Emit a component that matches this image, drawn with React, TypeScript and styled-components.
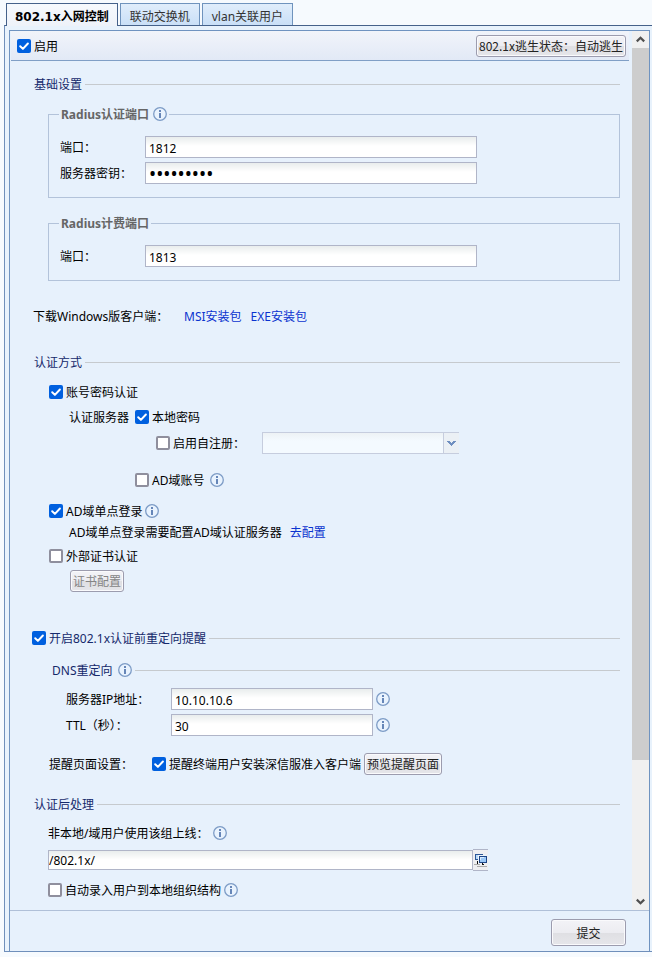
import React, { useState } from 'react';
import styled, { createGlobalStyle, css } from 'styled-components';

const GlobalStyle = createGlobalStyle`
  *, *::before, *::after { box-sizing: border-box; }
  body {
    margin: 0;
    background: #f6fafe;
    color: #000;
    font: 12px/20px "Noto Sans", "Noto Sans CJK SC", sans-serif;
  }
  input, button, select { font: inherit; color: inherit; margin: 0; }
`;

const Page = styled.div`
  min-height: 100vh;
  display: flex;
  flex-direction: column;
  padding: 3px 0 5px 4px;
`;

const TabBar = styled.div`
  display: flex;
  gap: 2px;
  padding-left: 2px;
`;

const Tab = styled.button<{ $active?: boolean }>`
  height: 22px;
  padding: 4px 9px 0;
  line-height: 18px;
  border: 1px solid #6f93bd;
  border-bottom: 0;
  background: linear-gradient(#e0edfb, #c9dff7);
  color: #333;
  white-space: nowrap;
  ${(p) =>
    p.$active &&
    css`
      height: 23px;
      margin-bottom: -1px;
      padding: 4px 8px 0;
      z-index: 1;
      border-color: #45618a;
      background: linear-gradient(#f6f9fd, #eef2f9);
      color: #000;
      font-family: "DejaVu Sans", "Noto Sans CJK SC", sans-serif;
      font-weight: 700;
    `}
`;

const Frame = styled.div`
  flex: 1;
  display: flex;
  flex-direction: column;
  padding: 4px 2px 0 4px;
  border: solid #6f8fbb;
  border-width: 1px 0 1px 1px;
  border-top-color: #45618a;
  background: #e8f2fc;
`;

const Panel = styled.main`
  flex: 1;
  display: flex;
  flex-direction: column;
  border: 1px solid #6f93c0;
  border-bottom: 0;
  background: #e7f1fc;
`;

const Viewport = styled.div`
  flex: 1;
  display: flex;
`;

const Content = styled.div`
  flex: 1;
  min-width: 0;
  padding: 0 3px 8px 1px;
`;

const TopBar = styled.header`
  display: flex;
  align-items: center;
  justify-content: space-between;
  height: 30px;
  padding: 0 3px 0 6px;
  border-bottom: 1px solid #809fc6;
  background: linear-gradient(#f1f4fa, #e2e9f6);
`;

const Form = styled.form`
  padding: 13px 9px 0 21px;
`;

const Text = styled.span`
  padding-top: 2px;
  line-height: 18px;
`;

const CheckLabel = styled.label`
  display: inline-flex;
  align-items: center;
  gap: 3px;
  white-space: nowrap;
`;

const CheckBox = styled.input.attrs({ type: 'checkbox' })`
  appearance: none;
  flex: none;
  width: 14px;
  height: 14px;
  border: 2px solid #8f8f9d;
  border-radius: 2px;
  background: #fff;
  &:checked {
    border: 0;
    background: #0060df
      url("data:image/svg+xml,%3Csvg xmlns='http://www.w3.org/2000/svg' viewBox='0 0 14 14'%3E%3Cpath d='M3.2 7.2l2.7 2.7 5-5.4' fill='none' stroke='white' stroke-width='2' stroke-linecap='round' stroke-linejoin='round'/%3E%3C/svg%3E");
  }
`;

const Button = styled.button<{ $large?: boolean }>`
  height: ${(p) => (p.$large ? 27 : 22)}px;
  min-width: ${(p) => (p.$large ? 75 : 0)}px;
  padding: 0 2px;
  border: 1px solid #9c9cae;
  border-radius: 3px;
  background: linear-gradient(#f3f3f7 0%, #ececf1 50%, #dfdfe3 51%, #e6e6ea 100%);
  box-shadow: inset 0 0 0 1px #fafafc;
  color: #222;
  font-family: "Noto Sans CJK SC", sans-serif;
  line-height: 18px;
  white-space: nowrap;
  &:disabled { color: #858585; }
`;

const Heading = styled.h2<{ $top?: number; $indent?: number }>`
  display: flex;
  align-items: center;
  gap: 3px;
  height: 20px;
  margin: ${(p) => p.$top ?? 0}px 0 0;
  padding-left: ${(p) => p.$indent ?? 2}px;
  color: #15296b;
  font-size: 12px;
  font-weight: 400;
  white-space: nowrap;
  &::after {
    content: '';
    flex: 1;
    height: 1px;
    background: #c6cace;
  }
`;

const Group = styled.fieldset<{ $top: number }>`
  display: flex;
  flex-direction: column;
  gap: 4px;
  min-width: 0;
  margin: ${(p) => p.$top}px 0 0 16px;
  padding: 12px 10px 13px;
  border: 1px solid #b3c3da;
`;

const Legend = styled.legend`
  display: flex;
  align-items: center;
  gap: 4px;
  height: 20px;
  padding: 0 2px;
  color: #666;
  font-weight: 700;
`;

const Row = styled.div<{ $top?: number; $indent?: number; $gap?: number }>`
  display: flex;
  align-items: center;
  gap: ${(p) => p.$gap ?? 3}px;
  min-height: 20px;
  margin-top: ${(p) => p.$top ?? 0}px;
  padding-left: ${(p) => p.$indent ?? 0}px;
  white-space: nowrap;
`;

const FieldLabel = styled.label<{ $width?: number }>`
  flex: none;
  width: ${(p) => (p.$width ? `${p.$width}px` : 'auto')};
  padding-top: 2px;
  line-height: 18px;
`;

const Caption = styled(Text)<{ $width: number }>`
  flex: none;
  width: ${(p) => p.$width}px;
`;

const TextBox = styled.input<{ $width: number; $flush?: boolean }>`
  width: ${(p) => p.$width}px;
  min-width: 0;
  height: ${(p) => (p.$flush ? 20 : 22)}px;
  padding: ${(p) => (p.$flush ? '2px 0 0' : '2px 3px 0')};
  border: 1px solid #b0b5c8;
  border-radius: 0;
  outline: 0;
  background: linear-gradient(#e9eded, #fff 9px);
  &[type='password'] {
    font-size: 19px;
  }
`;

const Link = styled.a`
  padding-top: 1px;
  line-height: 19px;
  color: #0a33cf;
  text-decoration: none;
`;

const Combo = styled.span`
  display: inline-flex;
  position: relative;
  margin-left: 14px;
`;

const Select = styled.select`
  appearance: none;
  width: 197px;
  height: 22px;
  border: 1px solid #c6cdde;
  border-right: 0;
  border-radius: 0;
  background: linear-gradient(#edf2f5, #f4faff 8px);
  opacity: 1;
`;

const ComboArrow = styled.span`
  position: absolute;
  top: 1px;
  right: 0;
  bottom: 1px;
  width: 16px;
  display: grid;
  place-items: center;
  border-left: 1px solid #c6cdde;
  background: #ebf0f5;
  pointer-events: none;
`;

const InfoButton = styled.button`
  flex: none;
  display: block;
  width: 14px;
  height: 14px;
  padding: 0;
  border: 0;
  background: none;
`;

const PickButton = styled.button`
  display: grid;
  place-items: center;
  width: 15px;
  height: 22px;
  padding: 0;
  border: solid #b0b5c8;
  border-width: 1px 0;
  background: #eeeef1;
`;

const Track = styled.div`
  flex: none;
  width: 17px;
  display: flex;
  flex-direction: column;
  background: #f0f0f0;
`;

const TrackButton = styled.button`
  display: grid;
  place-items: center;
  height: 17px;
  padding: 0;
  border: 0;
  background: none;
`;

const Thumb = styled.div`
  flex: 712;
  background: #cdcdcd;
`;

const TrackRest = styled.div`
  flex: 133;
`;

const Footer = styled.footer`
  display: flex;
  justify-content: flex-end;
  padding: 8px 23px 5px;
  border-top: 1px solid #b0c0d8;
`;

const Info = () => (
  <InfoButton type="button" aria-label="说明">
    <svg width="14" height="14" viewBox="0 0 14 14">
      <circle cx="7" cy="7" r="6.3" fill="#e9f3fe" stroke="#7d9cc6" strokeWidth="1.3" />
      <path d="M6 3h2v2H6zM6 6h2v5H6z" fill="#6686b8" />
    </svg>
  </InfoButton>
);

const Check = ({ label, on, disabled }: { label: string; on?: boolean; disabled?: boolean }) => {
  const [checked, setChecked] = useState(!!on);
  return (
    <CheckLabel>
      <CheckBox checked={checked} disabled={disabled} onChange={(e) => setChecked(e.target.checked)} />
      <Text>{label}</Text>
    </CheckLabel>
  );
};

const Chevron = ({ up }: { up?: boolean }) => (
  <svg width="9" height="7" viewBox="0 0 9 7">
    <path d={up ? 'M.8 5.4 4.5 1.7l3.7 3.7' : 'M.8 1.6l3.7 3.7 3.7-3.7'} fill="none" stroke="#505050" strokeWidth="2.2" />
  </svg>
);

const PickIcon = () => (
  <svg width="13" height="14" viewBox="0 0 13 14" shapeRendering="crispEdges">
    <path d="M1 1h8v6H1z" fill="#2b5797" />
    <path d="M2 2h6v4H2z" fill="#b9dafa" />
    <path d="M4 2h9v8H4z" fill="#eef4fb" />
    <path d="M5 3h8v7H5z" fill="#1d4587" />
    <path d="M6 4h6v5H6z" fill="#9cc8f6" />
    <path d="M6 4h4v1H7v2H6z" fill="#d9ecff" />
    <path d="M3 8h1v3H3zM8 10h1v1h1v1H8z" fill="#111" />
    <path d="M0 11h6v1H0zM3 13h10v1H3z" fill="#aaa" />
  </svg>
);

const tabs = ['802.1x入网控制', '联动交换机', 'vlan关联用户'];

export default function App() {
  const [tab, setTab] = useState(0);
  return (
    <>
      <GlobalStyle />
      <Page>
        <TabBar role="tablist">
          {tabs.map((name, i) => (
            <Tab key={name} role="tab" aria-selected={i === tab} $active={i === tab} onClick={() => setTab(i)}>
              {name}
            </Tab>
          ))}
        </TabBar>
        <Frame>
          <Panel>
            <Viewport>
              <Content>
                <TopBar>
                  <Check label="启用" on />
                  <Button type="button">802.1x逃生状态：自动逃生</Button>
                </TopBar>
                <Form id="access" onSubmit={(e) => e.preventDefault()}>
                  <Heading><Text>基础设置</Text></Heading>
                  <Group $top={10}>
                    <Legend><Text>Radius认证端口</Text><Info /></Legend>
                    <Row $gap={0} $indent={1}>
                      <FieldLabel $width={85} htmlFor="auth-port">端口：</FieldLabel>
                      <TextBox id="auth-port" $width={332} defaultValue="1812" />
                    </Row>
                    <Row $gap={0} $indent={1}>
                      <FieldLabel $width={85} htmlFor="secret">服务器密钥：</FieldLabel>
                      <TextBox id="secret" type="password" $width={332} defaultValue="radius123" />
                    </Row>
                  </Group>
                  <Group $top={15}>
                    <Legend><Text>Radius计费端口</Text></Legend>
                    <Row $gap={0} $indent={1}>
                      <FieldLabel $width={85} htmlFor="acct-port">端口：</FieldLabel>
                      <TextBox id="acct-port" $width={332} defaultValue="1813" />
                    </Row>
                  </Group>
                  <Row $top={25} $indent={1} $gap={9}>
                    <Caption $width={142}>下载Windows版客户端：</Caption>
                    <Link href="#msi">MSI安装包</Link>
                    <Link href="#exe">EXE安装包</Link>
                  </Row>

                  <Heading $top={26}><Text>认证方式</Text></Heading>
                  <Row $top={10} $indent={17}><Check label="账号密码认证" on /></Row>
                  <Row $top={5} $indent={37} $gap={6}>
                    <Text>认证服务器</Text>
                    <Check label="本地密码" on />
                  </Row>
                  <Row $top={5} $indent={124}>
                    <Check label="启用自注册：" />
                    <Combo>
                      <Select disabled aria-label="自注册方式" />
                      <ComboArrow>
                        <svg width="9" height="5" viewBox="0 0 9 5" shapeRendering="crispEdges">
                          <path d="M0 0h3v1h1v1h1V1h1V0h3v1H8v1H7v1H6v1H5v1H4V4H3V3H2V2H1V1H0z" fill="#6f8fc0" />
                        </svg>
                      </ComboArrow>
                    </Combo>
                  </Row>
                  <Row $top={16} $indent={103} $gap={6}><Check label="AD域账号" /><Info /></Row>
                  <Row $top={11} $indent={17}><Check label="AD域单点登录" on /><Info /></Row>
                  <Row $top={1} $indent={37} $gap={8}>
                    <Text>AD域单点登录需要配置AD域认证服务器</Text>
                    <Link href="#configure">去配置</Link>
                  </Row>
                  <Row $top={4} $indent={17}><Check label="外部证书认证" /></Row>
                  <Row $top={4} $indent={38}><Button type="button" disabled>证书配置</Button></Row>

                  <Heading $top={36} $indent={0}><Check label="开启802.1x认证前重定向提醒" on /></Heading>
                  <Heading as="h3" $top={12} $indent={20}>
                    <Row $gap={6}><Text>DNS重定向</Text><Info /></Row>
                  </Heading>
                  <Row $top={8} $indent={34}>
                    <FieldLabel $width={102} htmlFor="server-ip">服务器IP地址：</FieldLabel>
                    <TextBox id="server-ip" $width={202} defaultValue="10.10.10.6" />
                    <Info />
                  </Row>
                  <Row $top={4} $indent={34}>
                    <FieldLabel $width={102} htmlFor="ttl">TTL（秒）：</FieldLabel>
                    <TextBox id="ttl" $width={202} defaultValue="30" />
                    <Info />
                  </Row>
                  <Row $top={17} $indent={17}>
                    <Caption $width={100}>提醒页面设置：</Caption>
                    <Check label="提醒终端用户安装深信服准入客户端" on />
                    <Button type="button">预览提醒页面</Button>
                  </Row>

                  <Heading $top={19}><Text>认证后处理</Text></Heading>
                  <Row $top={9} $indent={16} $gap={5}>
                    <FieldLabel htmlFor="group">非本地/域用户使用该组上线：</FieldLabel>
                    <Info />
                  </Row>
                  <Row $top={6} $indent={16} $gap={0}>
                    <TextBox id="group" $width={425} $flush defaultValue="/802.1x/" />
                    <PickButton type="button" aria-label="选择用户组"><PickIcon /></PickButton>
                  </Row>
                  <Row $top={9} $indent={16}><Check label="自动录入用户到本地组织结构" /><Info /></Row>
                </Form>
              </Content>
              <Track>
                <TrackButton type="button" aria-label="向上滚动"><Chevron up /></TrackButton>
                <Thumb />
                <TrackRest />
                <TrackButton type="button" aria-label="向下滚动"><Chevron /></TrackButton>
              </Track>
            </Viewport>
            <Footer>
              <Button type="submit" form="access" $large>提交</Button>
            </Footer>
          </Panel>
        </Frame>
      </Page>
    </>
  );
}
